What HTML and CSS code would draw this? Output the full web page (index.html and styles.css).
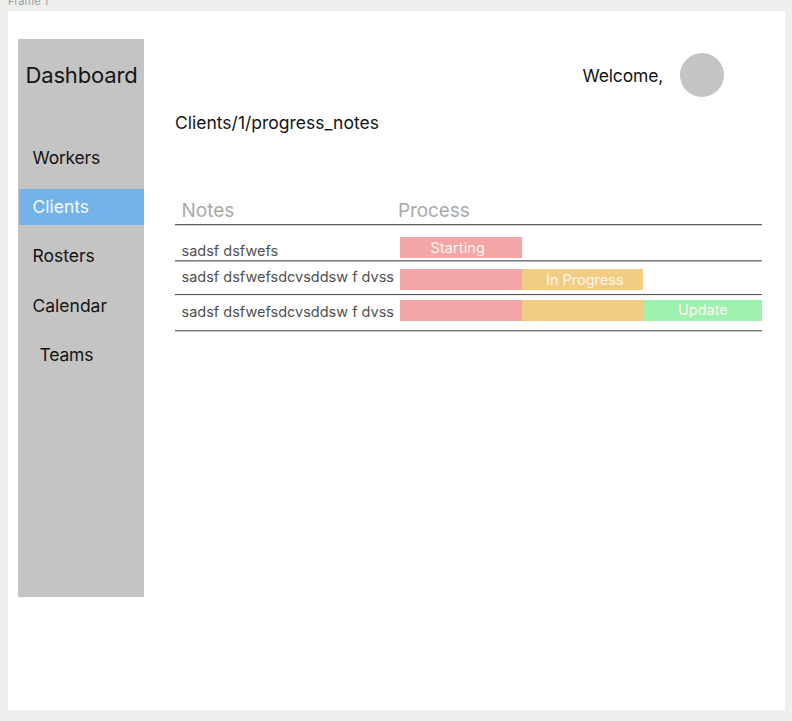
FILE: index.html
```html
<!DOCTYPE html>
<html lang="en">
<head>
<meta charset="utf-8">
<title>Dashboard</title>
<link rel="stylesheet" href="styles.css">
</head>
<body>
<div class="frame-label">Frame 1</div>
<div class="frame">
  <aside class="sidebar">
    <h1 class="brand">Dashboard</h1>
    <nav class="nav">
      <a class="nav-item tight">Workers</a>
      <a class="nav-item active">Clients</a>
      <a class="nav-item">Rosters</a>
      <a class="nav-item">Calendar</a>
      <a class="nav-item indented tight">Teams</a>
    </nav>
  </aside>
  <main class="main">
    <header class="header">
      <span class="welcome">Welcome,</span>
      <span class="avatar"></span>
    </header>
    <div class="path">Clients/1/progress_notes</div>
    <section class="table">
      <div class="row head"><span>Notes</span><span class="process">Process</span></div>
      <div class="row first">
        <span class="note">sadsf dsfwefs</span>
        <div class="bars"><div class="bar start"><span>Starting</span></div></div>
      </div>
      <div class="row second">
        <span class="note">sadsf dsfwefsdcvsddsw f dvss</span>
        <div class="bars"><div class="bar start"></div><div class="bar progress"><span>In Progress</span></div></div>
      </div>
      <div class="row third">
        <span class="note">sadsf dsfwefsdcvsddsw f dvss</span>
        <div class="bars"><div class="bar start"></div><div class="bar progress wide"></div><div class="bar update"><span>Update</span></div></div>
      </div>
    </section>
  </main>
</div>
</body>
</html>
```
FILE: styles.css
```css
* { box-sizing: border-box; }
html, body { margin: 0; height: 100%; overflow: hidden; }
body {
  background: #eeeeee;
  color: #141414;
  font-family: Inter, sans-serif;
  font-size: 17.5px;
}
.frame-label {
  height: 11px;
  padding-left: 8px;
  font-size: 11px;
  line-height: 14px;
  margin-top: -6px;
  margin-bottom: 6px;
  color: #a0a0a0;
  white-space: nowrap;
}
.frame {
  display: flex;
  width: 777px;
  height: 699px;
  margin-left: 8px;
  padding: 28px 23px 0 10px;
  background: #fff;
}
.sidebar {
  width: 126px;
  height: 558px;
  background: #c4c4c4;
}
.brand {
  margin: 20px 0 0;
  padding-left: 7.5px;
  font-size: 22px;
  font-weight: 400;
  line-height: 32px;
  letter-spacing: -0.16px;
}
.nav {
  display: grid;
  grid-auto-rows: 36px;
  row-gap: 13.4px;
  margin-top: 48.6px;
}
.nav-item {
  margin-left: 1px;
  padding-left: 13.5px;
  line-height: 36px;
}
.nav-item.active { height: 36px; background: #74b3e7; color: #f5faff; }
.nav-item.indented { padding-left: 20.5px; }
.nav-item.tight { letter-spacing: -0.2px; }
.main { width: 587px; margin-left: 31px; }
.header {
  display: flex;
  align-items: center;
  height: 44px;
  margin-top: 14px;
  padding-left: 407.5px;
}
.welcome { width: 97.5px; letter-spacing: -0.15px; }
.avatar { width: 44px; height: 44px; border-radius: 50%; background: #c4c4c4; }
.path { margin-top: 14px; line-height: 24px; }
.row {
  display: grid;
  grid-template-columns: 218.5px 1fr;
  padding-left: 6.5px;
  border-bottom: 1px solid #606060;
  box-shadow: 0 1px #d2d2d2;
  white-space: nowrap;
}
.head {
  height: 30px;
  margin-top: 60px;
  grid-template-columns: 216.5px 1fr;
  font-size: 19px;
  line-height: 32px;
  color: #a9a9a9;
}
.process { letter-spacing: -0.1px; }
.note { font-size: 14.5px; line-height: 20px; color: #505050; }
.first { height: 36px; border-color: #808080; box-shadow: 0 1px #b4b4b4; }
.second { height: 34px; border-color: #555; box-shadow: 0 1px #eee; }
.third { height: 36px; border-color: #707070; box-shadow: 0 1px #c8c8c8; }
.first .note { padding-top: 16px; }
.second .note { padding-top: 6px; }
.third .note { padding-top: 7px; }
.bars { display: flex; height: 21px; }
.first .bars { margin-top: 12px; }
.second .bars { margin-top: 8px; }
.third .bars { margin-top: 5px; }
.bar { width: 122px; color: #fff5ee; font-size: 14.5px; line-height: 21px; }
.start { background: #f4a6a6; padding-left: 30.5px; letter-spacing: 0.1px; }
.progress { width: 121px; background: #f1cd84; padding-left: 24px; }
.progress.wide { width: 122px; }
.update { width: 118px; background: #9ef1ae; padding-left: 34px; line-height: 20px; }
```
